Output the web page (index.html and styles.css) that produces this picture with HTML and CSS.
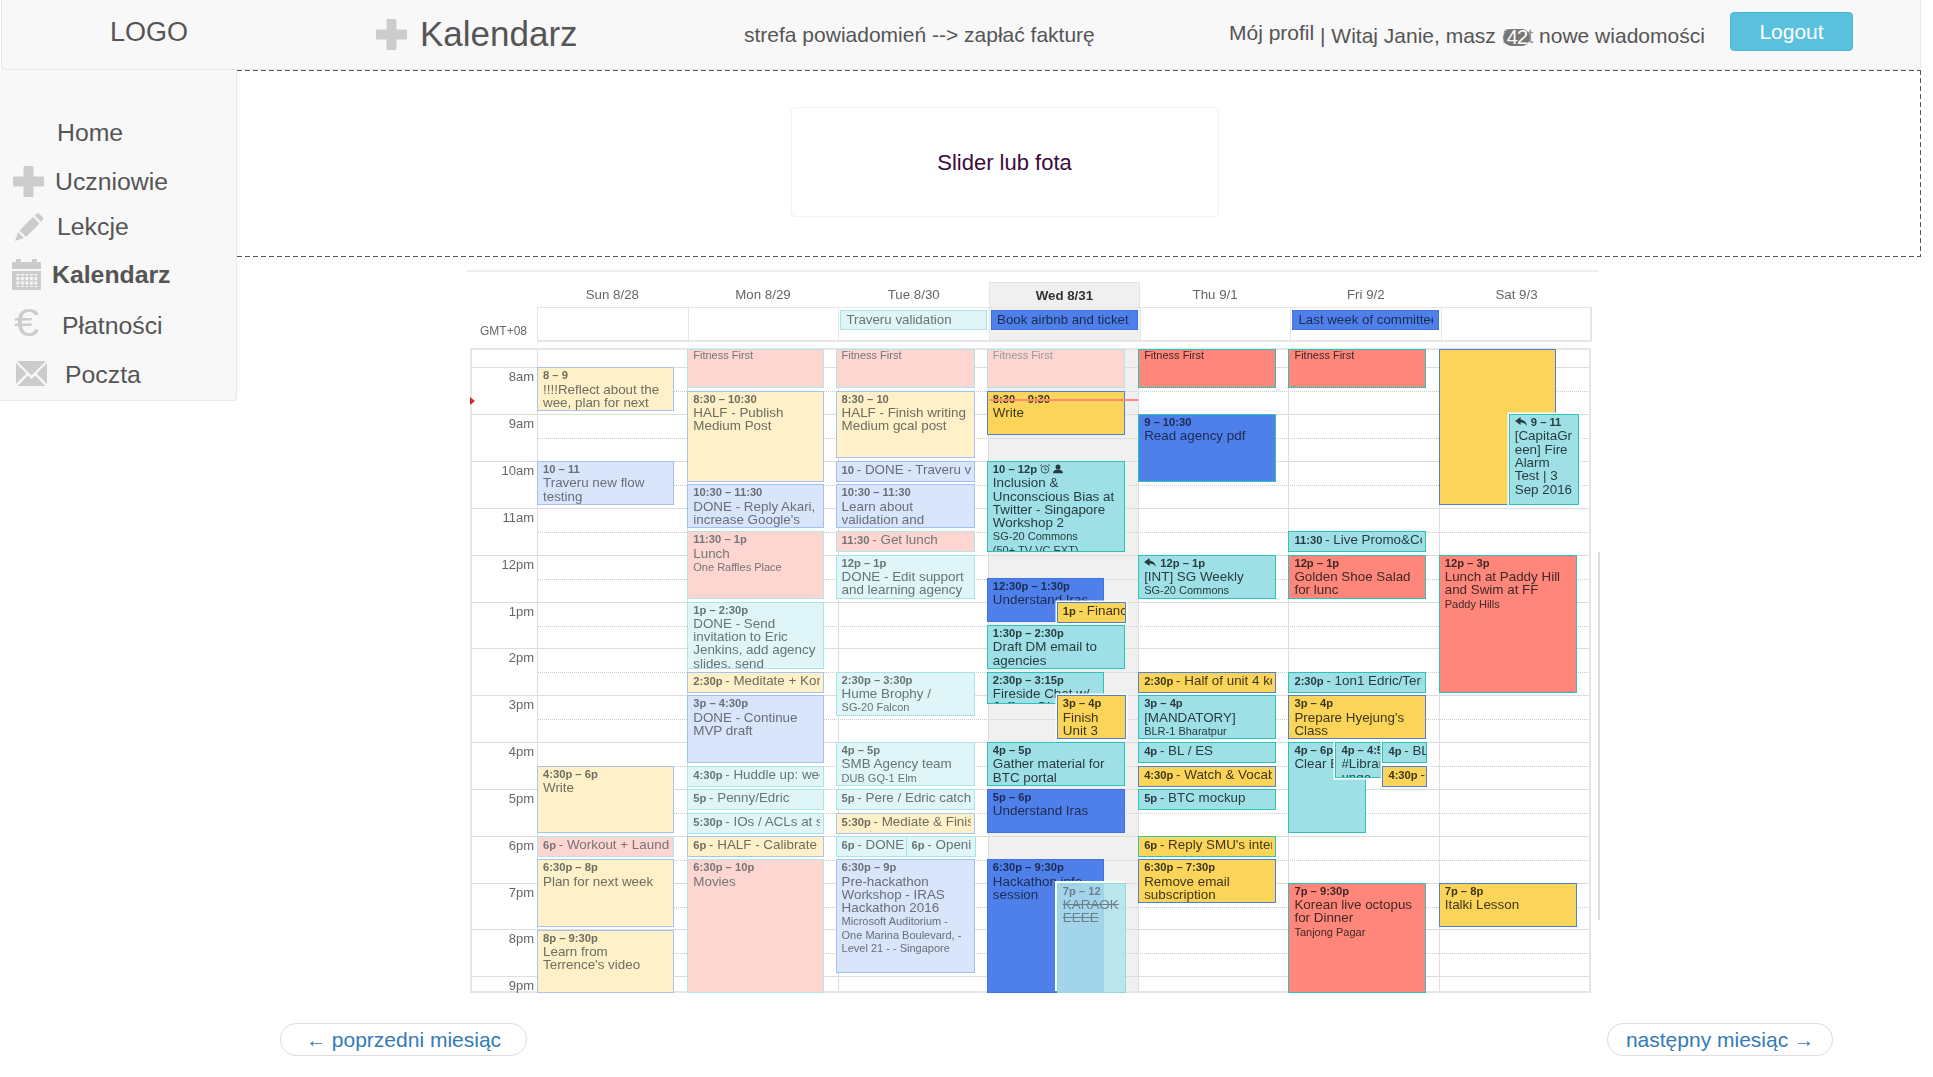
FILE: index.html
```html
<!DOCTYPE html>
<html lang="pl">
<head>
<meta charset="utf-8">
<title>Kalendarz</title>
<link rel="stylesheet" href="styles.css">
</head>
<body>
<header class="topbar">
  <div class="logo">LOGO</div>
  <div class="title">
    <svg class="ic-plus" viewBox="0 0 31 31"><path d="M12 0h7a1.500 1.500 0 0 1 1.500 1.500V10.500H29.500A1.500 1.500 0 0 1 31 12v7a1.500 1.500 0 0 1-1.500 1.500H20.500V29.500A1.500 1.500 0 0 1 19 31h-7a1.500 1.500 0 0 1-1.500-1.500V20.500H1.500A1.500 1.500 0 0 1 0 19v-7a1.500 1.500 0 0 1 1.500-1.500H10.500V1.500A1.500 1.500 0 0 1 12 0z"/></svg>
    <span>Kalendarz</span>
  </div>
  <div class="notif">strefa powiadomień --&gt; zapłać fakturę</div>
  <div class="profile"><span class="me">Mój profil</span> | Witaj Janie, masz <span class="under">1</span><span class="badge">42</span><span class="under">t</span> nowe wiadomości</div>
  <div><a class="logout">Logout</a></div>
</header>

<div class="layout">
  <nav class="side">
    <a class="nav-item"><span class="tx-home">Home</span></a>
    <a class="nav-item row-ucz">
      <svg class="ic ic-plus-s" viewBox="0 0 31 31"><path d="M12 0h7a1.500 1.500 0 0 1 1.500 1.500V10.500H29.500A1.500 1.500 0 0 1 31 12v7a1.500 1.500 0 0 1-1.500 1.500H20.500V29.500A1.500 1.500 0 0 1 19 31h-7a1.500 1.500 0 0 1-1.500-1.500V20.500H1.500A1.500 1.500 0 0 1 0 19v-7a1.500 1.500 0 0 1 1.500-1.500H10.500V1.500A1.500 1.500 0 0 1 12 0z"/></svg>
      <span class="tx-ucz">Uczniowie</span>
    </a>
    <a class="nav-item row-lek">
      <svg class="ic ic-pen" viewBox="0 0 29 28"><path d="M0 28l3-9 6 6z"/><path d="M4.500 17.500L18 4l6.500 6.500L11 24z"/><path d="M19.500 2.500L22 .5q1-.7 2 0l4 4q.7 1 0 2l-2 2.500z"/></svg>
      <span class="tx-lek">Lekcje</span>
    </a>
    <a class="nav-item active">
      <svg class="ic ic-cal" viewBox="0 0 29 31">
        <defs><pattern id="dots" width="4.500" height="4.500" patternUnits="userSpaceOnUse"><rect width="3" height="3" fill="#f8f8f8"/></pattern></defs>
        <path d="M4 0h5v3h11V0h5v3h3q1 0 1 1v6H0V4q0-1 1-1h3z"/><path d="M0 12h29v18q0 1-1 1H1q-1 0-1-1z"/><rect x="3.500" y="15" width="22" height="13" fill="url(#dots)"/>
      </svg>
      <span class="tx-kal">Kalendarz</span>
    </a>
    <a class="nav-item">
      <span class="ic-euro">€</span>
      <span class="tx-pla">Płatności</span>
    </a>
    <a class="nav-item">
      <svg class="ic ic-mail" viewBox="0 0 31 25"><path d="M1 0h29L15.500 14.500z"/><path d="M0 2v21l10.500-10.500z"/><path d="M31 2v21L20.500 12.500z"/><path d="M1.500 25l10.500-10.500 3.500 3.500 3.500-3.500L29.500 25z"/></svg>
      <span class="tx-poc">Poczta</span>
    </a>
  </nav>

  <main class="main">
    <section class="banner">
      <div class="slider">Slider lub fota</div>
    </section>

    <section class="cal">
      <div class="head">
        <div class="dn">Sun 8/28</div><div class="dn">Mon 8/29</div><div class="dn">Tue 8/30</div><div class="dn today">Wed 8/31</div><div class="dn">Thu 9/1</div><div class="dn">Fri 9/2</div><div class="dn">Sat 9/3</div>
        <div class="gmt">GMT+08</div>
        <div class="ad"></div>
        <div class="ad"></div>
        <div class="ad"><div class="ade f-teal">Traveru validation</div></div>
        <div class="ad ad-today"><div class="ade s-blue">Book airbnb and ticket</div></div>
        <div class="ad"></div>
        <div class="ad"><div class="ade s-blue">Last week of committee</div></div>
        <div class="ad ad-last"></div>
      </div>

      <div class="body">
        <div class="today-bg"></div>
        <div class="hours">
          <div class="hour first"></div>
          <div class="hour"><span class="hl">8am</span></div>
          <div class="hour"><span class="hl">9am</span></div>
          <div class="hour"><span class="hl">10am</span></div>
          <div class="hour"><span class="hl">11am</span></div>
          <div class="hour"><span class="hl">12pm</span></div>
          <div class="hour"><span class="hl">1pm</span></div>
          <div class="hour"><span class="hl">2pm</span></div>
          <div class="hour"><span class="hl">3pm</span></div>
          <div class="hour"><span class="hl">4pm</span></div>
          <div class="hour"><span class="hl">5pm</span></div>
          <div class="hour"><span class="hl">6pm</span></div>
          <div class="hour"><span class="hl">7pm</span></div>
          <div class="hour"><span class="hl">8pm</span></div>
          <div class="hour last"><span class="hl">9pm</span></div>
        </div>
        <div class="now-tri"></div>

        <div class="col c1"></div>
        <div class="col col-w">
          <div class="ev f-yel t800 h10"><b>8 – 9</b><p>!!!!Reflect about the wee, plan for next week's goals</p></div>
          <div class="ev f-blue t1000 h10"><b>10 – 11</b><p>Traveru new flow testing</p></div>
          <div class="ev f-yel t1630 h15"><b>4:30p – 6p</b><p>Write</p></div>
          <div class="ev f-pink t1800 h05 one"><b>6p</b> - Workout + Laundry</div>
          <div class="ev f-yel t1830 h15"><b>6:30p – 8p</b><p>Plan for next week</p></div>
          <div class="ev f-yel t2000 hend"><b>8p – 9:30p</b><p>Learn from Terrence's video</p></div>
        </div>
        <div class="col col-w">
          <div class="ev f-pink tff hff"><small>Fitness First</small></div>
          <div class="ev f-yel t830 h20"><b>8:30 – 10:30</b><p>HALF - Publish Medium Post</p></div>
          <div class="ev f-blue t1030 h10"><b>10:30 – 11:30</b><p>DONE - Reply Akari, increase Google's budget by 2 SMAs</p></div>
          <div class="ev f-pink t1130 h15"><b>11:30 – 1p</b><p>Lunch</p><small>One Raffles Place</small></div>
          <div class="ev f-teal t1300 h15"><b>1p – 2:30p</b><p>DONE - Send invitation to Eric Jenkins, add agency slides, send</p></div>
          <div class="ev f-yel t1430 h05 one"><b>2:30p</b> - Meditate + Korean</div>
          <div class="ev f-blue t1500 h15"><b>3p – 4:30p</b><p>DONE - Continue MVP draft</p></div>
          <div class="ev f-teal t1630 h05 one"><b>4:30p</b> - Huddle up: weekly</div>
          <div class="ev f-teal t1700 h05 one"><b>5p</b> - Penny/Edric</div>
          <div class="ev f-teal t1730 h05 one"><b>5:30p</b> - IOs / ACLs at scale</div>
          <div class="ev f-yel t1800 h05 one"><b>6p</b> - HALF - Calibrate 1on1</div>
          <div class="ev f-pink t1830 hend"><b>6:30p – 10p</b><p>Movies</p></div>
        </div>
        <div class="col col-l2">
          <div class="ev f-pink tff hff"><small>Fitness First</small></div>
          <div class="ev f-yel t830 h15"><b>8:30 – 10</b><p>HALF - Finish writing Medium gcal post</p></div>
          <div class="ev f-blue t1000 h05 one"><b>10</b> - DONE - Traveru validation</div>
          <div class="ev f-blue t1030 h10"><b>10:30 – 11:30</b><p>Learn about validation and learnings</p></div>
          <div class="ev f-pink t1130 h05 one"><b>11:30</b> - Get lunch</div>
          <div class="ev f-teal t1200 h10"><b>12p – 1p</b><p>DONE - Edit support and learning agency slides</p></div>
          <div class="ev f-teal t1430 h10"><b>2:30p – 3:30p</b><p>Hume Brophy /</p><small>SG-20 Falcon</small></div>
          <div class="ev f-teal t1600 h10"><b>4p – 5p</b><p>SMB Agency team</p><small>DUB GQ-1 Elm</small></div>
          <div class="ev f-teal t1700 h05 one"><b>5p</b> - Pere / Edric catch up</div>
          <div class="ev f-yel t1730 h05 one"><b>5:30p</b> - Mediate &amp; Finish</div>
          <div class="ev f-teal t1800 h05 one half-a"><b>6p</b> - DONE - Send</div>
          <div class="ev f-teal t1800 h05 one half-b"><b>6p</b> - Opening</div>
          <div class="ev f-blue t1830 h25"><b>6:30p – 9p</b><p>Pre-hackathon Workshop - IRAS Hackathon 2016</p><small>Microsoft Auditorium - One Marina Boulevard, - Level 21 - - Singapore</small></div>
        </div>
        <div class="col col-l1">
          <div class="ev f-pink ff-past tff hff"><small>Fitness First</small></div>
          <div class="ev s-yel t830 h10"><b>8:30 – 9:30</b><p>Write</p></div>
          <div class="ev s-teal t1000 h20"><b>10 – 12p <svg class="mini" viewBox="0 0 12 12"><circle cx="6" cy="6.500" r="4.500" fill="none" stroke="currentColor"/><path d="M6 4v3h2.500M0 2.500L2.500 .5M12 2.500L9.500 .5" fill="none" stroke="currentColor"/></svg> <svg class="mini" viewBox="0 0 12 12"><circle cx="6" cy="3.500" r="3"/><path d="M0 11c0-3 3-4.500 6-4.500s6 1.500 6 4.500z"/></svg></b><p>Inclusion &amp; Unconscious Bias at Twitter - Singapore Workshop 2</p><small>SG-20 Commons</small><small>(50+ TV VC EXT)</small></div>
          <div class="ev s-blue t1230 h10 w-main"><b>12:30p – 1:30p</b><p>Understand Iras</p></div>
          <div class="ev s-yel t1300 h05 one w-side over"><b>1p</b> - Finance</div>
          <div class="ev s-teal t1330 h10"><b>1:30p – 2:30p</b><p>Draft DM email to agencies</p></div>
          <div class="ev s-teal t1430 h-fire w-main"><b>2:30p – 3:15p</b><p>Fireside Chat w/ Jeffrey Gin</p></div>
          <div class="ev s-yel t1500 h10 w-side over"><b>3p – 4p</b><p>Finish<br>Unit 3<br>Hw</p></div>
          <div class="ev s-teal t1600 h10"><b>4p – 5p</b><p>Gather material for BTC portal</p></div>
          <div class="ev s-blue t1700 h10"><b>5p – 6p</b><p>Understand Iras</p></div>
          <div class="ev s-blue t1830 hend w-main"><b>6:30p – 9:30p</b><p>Hackathon info session</p></div>
          <div class="ev karaoke t1900 hend w-side"><b>7p – 12</b><p class="struck">KARAOK<br>EEEE</p></div>
          <div class="now-line"></div>
        </div>
        <div class="col">
          <div class="ev s-red tff hff"><small>Fitness First</small></div>
          <div class="ev s-blue bt t900 h15"><b>9 – 10:30</b><p>Read agency pdf</p></div>
          <div class="ev s-teal t1200 h10"><b><svg class="reply" viewBox="0 0 13 10"><path d="M6 0L0 4.500 6 9V6.200c3 0 5 1 7 3.800-.5-4-3-7-7-7.300z"/></svg> 12p – 1p</b><p>[INT] SG Weekly</p><small>SG-20 Commons</small></div>
          <div class="ev s-yel t1430 h05 one"><b>2:30p</b> - Half of unit 4 korean</div>
          <div class="ev s-teal t1500 h10"><b>3p – 4p</b><p>[MANDATORY]</p><small>BLR-1 Bharatpur</small></div>
          <div class="ev s-teal t1600 h05 one"><b>4p</b> - BL / ES</div>
          <div class="ev s-yel t1630 h05 one"><b>4:30p</b> - Watch &amp; Vocab</div>
          <div class="ev s-teal t1700 h05 one"><b>5p</b> - BTC mockup</div>
          <div class="ev s-yel bt t1800 h05 one"><b>6p</b> - Reply SMU's interview</div>
          <div class="ev s-yel t1830 h10"><b>6:30p – 7:30p</b><p>Remove email subscription</p></div>
        </div>
        <div class="col">
          <div class="ev s-red tff hff"><small>Fitness First</small></div>
          <div class="ev s-teal t1130 h05 one"><b>11:30</b> - Live Promo&amp;Co</div>
          <div class="ev s-red t1200 h10"><b>12p – 1p</b><p>Golden Shoe Salad for lunc</p></div>
          <div class="ev s-teal t1430 h05 one"><b>2:30p</b> - 1on1 Edric/Terry</div>
          <div class="ev s-yel t1500 h10"><b>3p – 4p</b><p>Prepare Hyejung's Class</p></div>
          <div class="ev s-teal t1600 h20 fri-a"><b>4p – 6p</b><p class="nw">Clear Backlog</p></div>
          <div class="ev s-teal t1600 h-lib fri-b over"><b>4p – 4:50p</b><p>#Library<br>unge</p></div>
          <div class="ev s-teal t1600 h05 one fri-c over"><b>4p</b> - BL / ES</div>
          <div class="ev s-yel t1630 h05 one fri-c over"><b>4:30p</b> - Watch</div>
          <div class="ev s-red bt t1900 hend"><b>7p – 9:30p</b><p>Korean live octopus for Dinner</p><small>Tanjong Pagar</small></div>
        </div>
        <div class="col">
          <div class="ev s-yel tff h-sat w-main"></div>
          <div class="ev s-teal t900 h20 sat-b over"><b><svg class="reply" viewBox="0 0 13 10"><path d="M6 0L0 4.500 6 9V6.200c3 0 5 1 7 3.800-.5-4-3-7-7-7.300z"/></svg> 9 – 11</b><p>[CapitaGr<br>een] Fire Alarm Test | 3 Sep 2016</p></div>
          <div class="ev s-red t1200 h30"><b>12p – 3p</b><p>Lunch at Paddy Hill and Swim at FF</p><small>Paddy Hills</small></div>
          <div class="ev s-yel t1900 h10"><b>7p – 8p</b><p>Italki Lesson</p></div>
        </div>
      </div>
      <div class="scroll-line"></div>
    </section>

    <div class="pager">
      <a class="pg pg-prev"><span class="arrow">←</span> poprzedni miesiąc</a>
      <a class="pg">następny miesiąc <span class="arrow">→</span></a>
    </div>
  </main>
</div>
</body>
</html>
```

FILE: styles.css
```css
* { box-sizing: border-box; }
html, body { margin: 0; padding: 0; }
body {
  font-family: "Liberation Sans", Arial, sans-serif;
  color: #555;
  background: #fff;
  width: 1933px;
  min-height: 1077px;
  overflow: hidden;
}

/* top bar */
.topbar {
  margin-left: 1px;
  width: 1920px;
  height: 70px;
  background: #f8f8f8;
  border: 1px solid #e7e7e7;
  border-top: 0;
  border-radius: 0 0 4px 4px;
  display: grid;
  grid-template-columns: 374px 368px 485px 501px 1fr;
  align-items: center;
}
.logo { font-size: 27px; padding-left: 108px; margin-bottom: 4px; }
.title { display: flex; align-items: center; gap: 13px; font-size: 35px; margin-bottom: 1px; }
.ic-plus { width: 31px; height: 31px; fill: #ccc; }
.notif { font-size: 21px; }
.profile { font-size: 21px; white-space: nowrap; padding-top: 2px; }
.me { position: relative; top: -3px; }
.under { color: #999; }
.badge {
  display: inline-block;
  margin: 0 -3px 0 -10px;
  position: relative;
  width: 27px;
  height: 17px;
  line-height: 17px;
  text-align: center;
  font-size: 20px;
  letter-spacing: -1px;
  color: #fff;
  background: #777;
  border-radius: 9px;
  vertical-align: -1px;
}
.logout {
  display: block;
  width: 123px;
  height: 39px;
  line-height: 37px;
  margin-bottom: 6px;
  text-align: center;
  font-size: 21px;
  color: #fff;
  background: #5bc0de;
  border: 1px solid #46b8da;
  border-radius: 4px;
}

/* layout */
.layout { display: grid; grid-template-columns: 237px 1fr; align-items: start; }

/* side navigation */
.side {
  height: 331px;
  padding-top: 38px;
  background: #f8f8f8;
  border: 1px solid #e7e7e7;
  border-width: 0 1px 1px 0;
  border-radius: 0 0 4px 0;
  font-size: 24.800px;
}
.nav-item { display: flex; align-items: center; height: 49px; }
.row-ucz { height: 48px; padding-top: 1px; }
.row-lek { height: 43px; }
.active { font-weight: 700; height: 53px; }
.ic { flex: none; fill: #ccc; }
.ic-plus-s { width: 31px; height: 31px; margin-left: 13px; }
.ic-pen { width: 29px; height: 28px; margin-left: 15px; }
.ic-cal { width: 29px; height: 31px; margin-left: 12px; }
.ic-mail { width: 31px; height: 25px; margin-left: 16px; margin-top: -2px; }
.ic-euro {
  width: 24px;
  margin-left: 14px;
  margin-top: -5px;
  font-size: 38px;
  font-weight: 400;
  color: #ccc;
  transform: scaleX(1.200);
  transform-origin: left center;
}
.tx-home { margin-left: 57px; }
.tx-ucz { margin-left: 11px; }
.tx-lek { margin-left: 13px; }
.tx-kal { margin-left: 11px; }
.tx-pla { margin-left: 24px; }
.tx-poc { margin-left: 18px; }

/* banner: 5px dash, 3px gap, on the top, right and bottom edges */
.banner {
  height: 187px;
  width: 1684px;
  padding: 37px 0 0 554px;
  background-image:
    repeating-linear-gradient(90deg, #555 0 5px, transparent 5px 8px),
    repeating-linear-gradient(90deg, #555 0 5px, transparent 5px 8px),
    repeating-linear-gradient(180deg, #555 0 5px, transparent 5px 8px);
  background-repeat: no-repeat;
  background-size: 100% 1px, 100% 1px, 1px 100%;
  background-position: left top, left bottom, right top;
}
.slider {
  width: 428px;
  height: 110px;
  display: flex;
  align-items: center;
  justify-content: center;
  padding: 1px 1px 0 0;
  font-size: 22px;
  color: #3b0a40;
  background: #fff;
  border: 1px solid #f1f1f1;
  border-radius: 4px;
}

/* calendar */
.cal {
  position: relative;
  margin: 13px 0 0 230px;
  width: 1132px;
  padding-top: 10px;
  border-top: 2px solid #eee;
  filter: blur(.3px);
}
.head {
  display: grid;
  grid-template-columns: 70px repeat(7, 150.700px);
  grid-template-rows: 25px 35px;
}
.dn {
  line-height: 25px;
  text-align: center;
  font-size: 13.300px;
  color: #666;
}
.dn:first-child { grid-column: 2; }
.today {
  font-weight: 700;
  color: #333;
  background: #f0f0f0;
  border: 1px solid #e4e4e4;
  border-bottom: 0;
}
.gmt {
  padding: 17px 0 0 13px;
  font-size: 12px;
  line-height: 14px;
  color: #666;
}
.ad {
  padding: 2px 2px 0 1px;
  border: 2px solid #e6e6e6;
  border-width: 1px 0 2px 1px;
  min-width: 0;
}
.ad-today { background: #f0f0f0; }
.ad-last { border-right-width: 2px; }
.ade {
  height: 20px;
  line-height: 18px;
  padding: 0 5px;
  font-size: 13.300px;
  white-space: nowrap;
  border: 1px solid;
  overflow: clip;
  overflow-clip-margin: content-box;
}
.body {
  position: relative;
  display: grid;
  grid-template-columns: 65px repeat(7, 1fr);
  margin: 6px 0 0 3px;
  width: 1121px;
  height: 645px;
  border: 2px solid #e6e6e6;
}
.today-bg {
  position: absolute;
  top: 0;
  bottom: 0;
  left: 516px;
  width: 150.300px;
  background: #f0f0f0;
}
.hours {
  position: absolute;
  inset: 0;
  display: flex;
  flex-direction: column;
}
.hour {
  position: relative;
  flex: none;
  height: 46.850px;
  border-top: 1px solid #ddd;
}
.hour::after {
  content: "";
  position: absolute;
  left: 65px;
  right: 0;
  top: 23px;
  border-top: 1px dotted #ccc;
}
.first { height: 17.300px; border-top: 0; }
.first::after, .last::after { display: none; }
.last { height: 14.500px; }
.hl {
  display: block;
  width: 62px;
  padding-top: 2px;
  text-align: right;
  font-size: 13px;
  line-height: 14px;
  color: #666;
}
.now-tri {
  position: absolute;
  left: -2px;
  top: 47px;
  border: 4px solid transparent;
  border-left: 5px solid #d9222a;
  border-right: 0;
}
.col { position: relative; border-left: 1px solid #ddd; }
.c1 { border-left: 0; }
.col-w .ev { width: 137px; }
.col-l2 .ev { margin-left: -2px; }
.col-l2 .ev:not(.half-b) { width: 139px; }
.col-l1 .ev { margin-left: -1px; }
.now-line {
  position: absolute;
  left: 0;
  right: 0;
  top: 49px;
  height: 2px;
  background: #ff8a75;
  z-index: 2;
}
.scroll-line {
  position: absolute;
  left: 1131px;
  top: 280px;
  width: 2px;
  height: 368px;
  background: #ddd;
}

/* events */
.ev {
  position: absolute;
  left: -1px;
  width: 138px;
  padding: 1px 3px 0 5px;
  font-size: 13.400px;
  line-height: 13.300px;
  border: 1px solid;
  overflow: clip;
  overflow-clip-margin: content-box;
}
.ev b { display: block; font-size: 11.200px; white-space: nowrap; }
.ev p { margin: 0; }
.ev small { display: block; font-size: 11px; }
.ev p + small { margin-top: 1px; }
.one { white-space: nowrap; padding-top: 1px; }
.one b { display: inline; margin-right: -1px; }
.nw { white-space: nowrap; }
.struck { text-decoration: line-through; }

.mini { width: 10px; height: 10px; fill: currentColor; vertical-align: -1px; }
.reply { width: 12px; height: 9px; fill: currentColor; margin-right: 1px; }

.f-pink { background: #fdd6d2; border-color: #b5e6e6; color: #757575; }
.f-yel { background: #fef0c8; border-color: #a9c3f0; color: #6e6e60; }
.f-blue { background: #d8e5fa; border-color: #a3c0f0; color: #6a6e78; }
.f-teal { background: #dff5f7; border-color: #a9e5e6; color: #687476; }
.ff-past { color: #999; }
.s-red { background: #fe867b; border-color: #2bc4b8; color: #402826; }
.s-yel { background: #fbd55a; border-color: #4d80d8; color: #3e3618; }
.s-blue { background: #4f80ea; border-color: #3f74e0; color: #1b2a52; }
.s-teal { background: #9fe0e6; border-color: #2cc4b8; color: #263c40; }
.bt { border-color: #2cc4b8; }
.karaoke { background: rgba(177, 228, 234, .85); border-color: #8fdcd8; color: #6c7f88; box-shadow: -2px -2px 0 #fff; }
.over { box-shadow: 0 0 0 1.500px #fff; z-index: 1; }

/* start times */
.tff { top: -1px; }
.t800 { top: 17.300px; }
.t830 { top: 40.700px; }
.t900 { top: 64.200px; }
.t1000 { top: 111px; }
.t1030 { top: 134.400px; }
.t1130 { top: 181.300px; }
.t1200 { top: 204.700px; }
.t1230 { top: 228.100px; }
.t1300 { top: 251.600px; }
.t1330 { top: 275px; }
.t1430 { top: 321.900px; }
.t1500 { top: 345.300px; }
.t1600 { top: 392.200px; }
.t1630 { top: 415.600px; }
.t1700 { top: 439px; }
.t1730 { top: 462.500px; }
.t1800 { top: 485.900px; }
.t1830 { top: 509.300px; }
.t1900 { top: 532.800px; }
.t2000 { top: 579.600px; }

/* durations */
.hff { height: 39px; padding-top: 0; }
.hff small { line-height: 11px; }
.h05 { height: 21px; }
.h10 { height: 44px; }
.h15 { height: 67.500px; }
.h20 { height: 91px; }
.h25 { height: 114px; }
.h30 { height: 138px; }
.hend { height: auto; bottom: -2px; }
.h-fire { height: 32.500px; }
.h-lib { height: 36px; }
.h-sat { height: 156px; }

/* overlap placement */
.w-main { width: 117px; }
.w-side { left: 69px; width: 69px; padding-right: 0; }
.half-a { width: 68px; }
.half-b { left: 69px; width: 70px; padding-left: 5px; }
.fri-a { width: 78px; }
.fri-b { left: 46px; width: 46px; padding-right: 0; }
.fri-c { left: 93px; width: 45px; padding-right: 0; }
.sat-b { left: 69px; width: 70px; }

/* pager */
.pager {
  display: flex;
  justify-content: space-between;
  margin-top: 30px;
  padding: 0 100px 0 43px;
}
.pg {
  display: block;
  height: 33px;
  padding: 0 18px;
  line-height: 32px;
  font-size: 21px;
  color: #337ab7;
  background: #fff;
  border: 1px solid #ddd;
  border-radius: 16px;
}
.pg-prev { padding: 0 25px; }
.arrow { font-size: 20px; }
```
